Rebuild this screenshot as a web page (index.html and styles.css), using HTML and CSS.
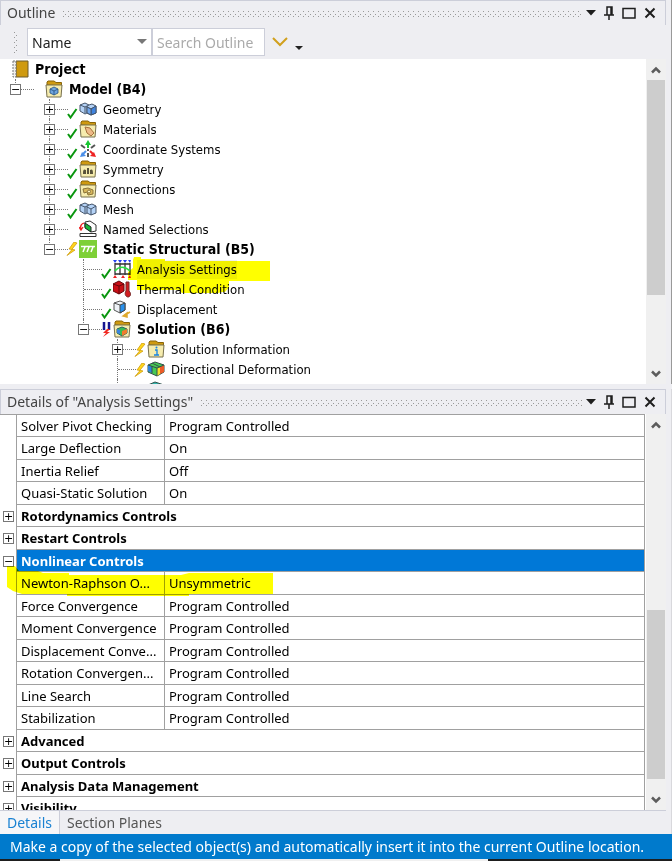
FILE: index.html
```
<!DOCTYPE html>
<html lang="en">
<head>
    <meta charset="UTF-8">
    <meta name="viewport" content="width=device-width, initial-scale=1.0">
    <title>Outline</title>
    <link rel="stylesheet" href="styles.css">
</head>
<body>

    <!-- Shared icons -->
    <svg class="sprite" aria-hidden="true">
        <symbol id="check" viewBox="0 0 12 12"><path d="M2 6.500l2.500 3.500L10.500 1.500" fill="none" stroke="#0a960f" stroke-width="2"/></symbol>
        <symbol id="bolt" viewBox="0 0 12 15"><path d="M8 0L3 7l3 .5L1 13.500l8-5.500-3-.8L11 1z" fill="#ffd51c" stroke="#c89400" stroke-width=".7"/></symbol>
        <symbol id="folder" viewBox="0 0 18 18">
            <path d="M2 5V2l1-1h6l2 1.500h5.500V6z" fill="#cf9a10" stroke="#8a6508"/>
            <path d="M1 5h16l-1 12H2z" fill="#f6ecae" stroke="#77704e"/>
        </symbol>
        <symbol id="cube" viewBox="0 0 10 10">
            <path d="M1 3l4-2 4 2v4L5 9 1 7z" fill="#6fa5de" stroke="#234f80" stroke-width=".8"/>
            <path d="M1 3l4 2 4-2M5 5v4" fill="none" stroke="#234f80" stroke-width=".8"/>
        </symbol>
        <symbol id="blocks" viewBox="0 0 18 14">
            <path d="M1 3l5-2 4 2 3-1 4 2v7l-5 2-4-2-2 1-5-3z" fill="#b4d2f6" stroke="#44546a"/>
            <path d="M1 3l5 2v6M6 5l4-2M8 5l4 2v6M12 7l5-3M8 4v7" fill="none" stroke="#44546a"/>
        </symbol>
        <symbol id="pin" viewBox="0 0 10 14"><path d="M3 9V1h5v8M0 9h10M5 9v5M7 1v8" fill="none" stroke="#1e1e1e" stroke-width="1.500"/></symbol>
        <symbol id="close" viewBox="0 0 12 12"><path d="M1.500 1.500l9 9M10.500 1.500l-9 9" stroke="#1e1e1e" stroke-width="2"/></symbol>
        <symbol id="square" viewBox="0 0 14 12"><path d="M1 1.500h12v9.500H1z" fill="none" stroke="#1e1e1e" stroke-width="1.500"/></symbol>
        <symbol id="down" viewBox="0 0 10 6"><path d="M0 0h10L5 5.500z" fill="#1e1e1e"/></symbol>
        <symbol id="chevron" viewBox="0 0 10 8"><path d="M1 6.500l4-4 4 4" fill="none" stroke="#5c5c5c" stroke-width="2.500"/></symbol>
    </svg>

    <!-- Outline panel -->
    <section class="panel outline">
        <header class="titlebar">
            <h2>Outline</h2>
            <span class="grip"></span>
            <button aria-label="Menu"><svg width="10" height="6"><use href="#down"/></svg></button>
            <button aria-label="Pin"><svg width="10" height="14"><use href="#pin"/></svg></button>
            <button aria-label="Maximize"><svg width="14" height="12"><use href="#square"/></svg></button>
            <button aria-label="Close"><svg width="12" height="12"><use href="#close"/></svg></button>
        </header>
        <div class="toolbar">
            <span class="grip grip-vertical"></span>
            <div class="select-box">
                <select aria-label="Filter by"><option>Name</option></select>
                <svg width="10" height="6"><path d="M0 0h10L5 5z" fill="#777"/></svg>
            </div>
            <input type="text" aria-label="Search Outline" placeholder="Search Outline">
            <button aria-label="Expand"><svg width="16" height="10"><path d="M1 1l7 7 7-7" fill="none" stroke="#d1a01d" stroke-width="2"/></svg></button>
            <button class="more" aria-label="More"><svg width="8" height="4"><path d="M0 0h8L4 4z" fill="#222"/></svg></button>
        </div>
        <div class="scroll-area">
            <div class="tree">
                <ul>
                    <li class="root">
                        <div class="node bold"><svg class="icon" viewBox="0 0 18 18"><path d="M5 1h12v16H5z" fill="#cf9a10" stroke="#6d5a2a"/><path d="M2 1h3v16H2z" fill="#eee" stroke="#777" stroke-dasharray="2 1"/></svg><span>Project</span></div>
                        <ul>
                            <li>
                                <div class="node bold model"><button class="box" aria-label="Collapse">−</button><i class="link"></i><svg class="icon" viewBox="0 0 18 18"><use href="#folder"/><use href="#cube" x="4" y="6" width="10" height="10"/></svg><span>Model (B4)</span></div>
                                <ul>
                                    <li><div class="node"><button class="box" aria-label="Expand">+</button><i class="link"></i><svg class="state check"><use href="#check"/></svg><svg class="icon" viewBox="0 0 18 18"><use href="#blocks" y="2" width="18" height="14"/><path d="M12 9l5-3v7l-5 2z" fill="#3f83df" stroke="#44546a"/><path d="M8 7l4 2v6l-4-2z" fill="#6fa6ee" stroke="#44546a"/></svg><span>Geometry</span></div></li>
                                    <li><div class="node"><button class="box" aria-label="Expand">+</button><i class="link"></i><svg class="state check"><use href="#check"/></svg><svg class="icon" viewBox="0 0 18 18"><use href="#folder"/><path d="M6 7l5 1 4 5-3 3-4-3z" fill="#edb988" stroke="#a5713c"/></svg><span>Materials</span></div></li>
                                    <li><div class="node"><button class="box" aria-label="Expand">+</button><i class="link"></i><svg class="state check"><use href="#check"/></svg><svg class="icon" viewBox="0 0 18 18"><path d="M9 8V4" stroke="#19c733" stroke-width="2"/><path d="M9 0l3 5H6z" fill="#19c733"/><path d="M11 11l3 3" stroke="#e22" stroke-width="2"/><path d="M17 17l-6-1 4-4z" fill="#e22"/><path d="M7 11l-3 3" stroke="#4b8fe8" stroke-width="2"/><path d="M1 17l6-1-4-4z" fill="#4b8fe8"/><path d="M2 5l4 3M16 5l-4 3M9 13v4M8 10h2" stroke="#555" stroke-width="2"/></svg><span>Coordinate Systems</span></div></li>
                                    <li><div class="node"><button class="box" aria-label="Expand">+</button><i class="link"></i><svg class="state check"><use href="#check"/></svg><svg class="icon" viewBox="0 0 18 18"><use href="#folder"/><path d="M4 14c0-5 1-5 3-4v4zM8 14V8h2v6zM11 14v-4c2-1 3-1 3 4z" fill="#59533a"/></svg><span>Symmetry</span></div></li>
                                    <li><div class="node"><button class="box" aria-label="Expand">+</button><i class="link"></i><svg class="state check"><use href="#check"/></svg><svg class="icon" viewBox="0 0 18 18"><use href="#folder"/><path d="M4 9l5-1 5 2v4l-5 1-1-3-3 1z" fill="#d8b75c" stroke="#8a733a"/><circle cx="10" cy="11.500" r="1.500" fill="#fff5c0" stroke="#8a733a"/></svg><span>Connections</span></div></li>
                                    <li><div class="node"><button class="box" aria-label="Expand">+</button><i class="link"></i><svg class="state check"><use href="#check"/></svg><svg class="icon" viewBox="0 0 18 18"><use href="#blocks" y="2" width="18" height="14"/></svg><span>Mesh</span></div></li>
                                    <li><div class="node"><button class="box" aria-label="Expand">+</button><i class="link"></i><i class="state"></i><svg class="icon" viewBox="0 0 18 18"><path d="M6 2l5-1 6 4v6l-5 1-6-5z" fill="#fff" stroke="#333"/><path d="M6 3l6 4v5L6 8z" fill="#18b83a" stroke="#222"/><path d="M5 3C2 4 1 6 2 9M0 7l2 3 2-3" fill="none" stroke="#e22" stroke-width="1.300"/><path d="M1 13.500h16v3H1z" fill="#fff" stroke="#333"/></svg><span>Named Selections</span></div></li>
                                    <li>
                                        <div class="node bold"><button class="box" aria-label="Collapse">−</button><i class="link"></i><svg class="state"><use href="#bolt"/></svg><svg class="icon" viewBox="0 0 18 18"><path d="M0 0h18v18H0z" fill="#7ed037"/><path d="M2 6.500h14M6 7l-2 5M10 7l-2 5M14 7l-2 5" stroke="#fff" stroke-width="1.500"/></svg><span>Static Structural (B5)</span></div>
                                        <ul>
                                            <li><div class="node current"><i class="link wide"></i><svg class="state check"><use href="#check"/></svg><svg class="icon" viewBox="0 0 18 18"><path d="M2 3v12M7 3v12M12 3v12M17 3v12M2 4h15M2 14h15" stroke="#333" stroke-width="1.300"/><path d="M2 11c4-5 10-5 15 0" fill="none" stroke="#29df43" stroke-width="1.500"/><path d="M0 0h4L2 3zM5 0h4L7 3zM10 0h4l-2 3zM15 0h3l-1 3z" fill="#2441ee"/><path d="M0 18h4l-2-3zM8 18h4l-2-3zM15 18h3l-1-3z" fill="#e22"/></svg><span>Analysis Settings</span>
                                                <svg class="marker marker-tree" width="144" height="36"><path d="M5 3L6 0h7v2h24v2h105v20H101v6l-4 5h-3l-4 1H54l-3-3H9V23H0v-8l5-4z"/></svg></div></li>
                                            <li><div class="node"><i class="link wide"></i><svg class="state check"><use href="#check"/></svg><svg class="icon" viewBox="0 0 18 18"><path d="M0 4l6-3 5 3v7l-5 3-6-3z" fill="#c90f16" stroke="#65070a"/><path d="M0 4l6 2 5-2M6 6v8" fill="none" stroke="#65070a"/><path d="M13 2h3v9c3 3 1 6-1 6s-4-3-2-6z" fill="#d21d20" stroke="#762828"/></svg><span>Thermal Condition</span></div></li>
                                            <li><div class="node"><i class="link wide"></i><svg class="state check"><use href="#check"/></svg><svg class="icon" viewBox="0 0 18 18"><path d="M1 3l6-2 5 2v7l-5 3-6-3z" fill="#eef2f7" stroke="#555"/><path d="M7 5l5-2v7l-5 3z" fill="#2990eb" stroke="#444"/><path d="M1 3l6 2" stroke="#555"/><path d="M17 12l-5 3M10 16l4-3v4z" fill="#e0a92c" stroke="#e0a92c" stroke-width="1.500"/></svg><span>Displacement</span></div></li>
                                            <li>
                                                <div class="node bold"><button class="box" aria-label="Collapse">−</button><i class="link"></i><svg class="state" viewBox="0 0 12 15"><path d="M4 0v8M9 0v8" stroke="#16168f" stroke-width="2.500"/><path d="M7 7l-4 4h3l-3 4 7-5H7l3-3z" fill="#f12b24"/></svg><svg class="icon" viewBox="0 0 18 18"><use href="#folder"/><path d="M4 9l5-2 5 2v4l-5 3-5-3z" fill="#36be52" stroke="#28605c"/><path d="M9 11l5-2v4l-5 3z" fill="#f07b2d"/><path d="M4 9l3 1v4l-3-1z" fill="#3b83e0"/></svg><span>Solution (B6)</span></div>
                                                <ul>
                                                    <li><div class="node"><button class="box" aria-label="Expand">+</button><i class="link"></i><svg class="state bolt"><use href="#bolt"/></svg><svg class="icon" viewBox="0 0 18 18"><use href="#folder"/><path d="M8 10h2v5M7 15h5" fill="none" stroke="#1683e3" stroke-width="1.300"/><circle cx="9.500" cy="7.500" r="1" fill="#1683e3"/></svg><span>Solution Information</span></div></li>
                                                    <li><div class="node"><i class="link wide"></i><svg class="state bolt"><use href="#bolt"/></svg><svg class="icon" viewBox="0 0 18 18"><path d="M1 5l7-3 9 3v7l-7 4-9-4z" fill="#46ca54" stroke="#33504a"/><path d="M1 5l4 2v6l-4-2z" fill="#2d83df"/><path d="M10 8l3-1v7l-3 2z" fill="#f4df2c"/><path d="M13 7l4-2v7l-4 2z" fill="#ed5b27"/><path d="M1 5l9 3 7-3M10 8v8M5 3l8 4M5 6v7" fill="none" stroke="#33504a"/></svg><span>Directional Deformation</span></div></li>
                                                    <li><div class="node"><i class="link wide"></i><i class="state"></i><svg class="icon" viewBox="0 0 18 18"><path d="M1 5l7-3 9 3v7l-7 4-9-4z" fill="#33b6ae" stroke="#33504a"/></svg><span>Total Deformation</span></div></li>
                                                </ul>
                                            </li>
                                        </ul>
                                    </li>
                                </ul>
                            </li>
                        </ul>
                    </li>
                </ul>
            </div>
            <div class="scrollbar">
                <svg class="arrow" viewBox="0 0 10 8"><use href="#chevron"/></svg>
                <div class="track"><div class="thumb thumb-outline"></div></div>
                <svg class="arrow arrow-down" viewBox="0 0 10 8"><use href="#chevron"/></svg>
            </div>
        </div>
    </section>

    <!-- Details panel -->
    <section class="panel details">
        <header class="titlebar">
            <h2>Details of "Analysis Settings"</h2>
            <span class="grip"></span>
            <button aria-label="Menu"><svg width="10" height="6"><use href="#down"/></svg></button>
            <button aria-label="Pin"><svg width="10" height="14"><use href="#pin"/></svg></button>
            <button aria-label="Maximize"><svg width="14" height="12"><use href="#square"/></svg></button>
            <button aria-label="Close"><svg width="12" height="12"><use href="#close"/></svg></button>
        </header>
        <div class="scroll-area">
            <div class="grid">
                <table>
                    <colgroup><col class="col-box"><col class="col-name"><col></colgroup>
                    <tbody>
                        <tr><td></td><td>Solver Pivot Checking</td><td>Program Controlled</td></tr>
                        <tr><td></td><td>Large Deflection</td><td>On</td></tr>
                        <tr><td></td><td>Inertia Relief</td><td>Off</td></tr>
                        <tr><td></td><td>Quasi-Static Solution</td><td>On</td></tr>
                        <tr><td><button class="box" aria-label="Expand">+</button></td><th colspan="2">Rotordynamics Controls</th></tr>
                        <tr><td><button class="box" aria-label="Expand">+</button></td><th colspan="2">Restart Controls</th></tr>
                        <tr class="selected"><td><button class="box" aria-label="Collapse">−</button></td><th colspan="2">Nonlinear Controls</th></tr>
                        <tr class="marked"><td><svg class="marker marker-grid" width="268" height="32"><path d="M0 0h8l4 5h19l5 2h26v2h112l8-2h84v21h-84v2H60v-2H15l-9-3-6-4z"/></svg></td><td>Newton-Raphson O...</td><td>Unsymmetric</td></tr>
                        <tr><td></td><td>Force Convergence</td><td>Program Controlled</td></tr>
                        <tr><td></td><td>Moment Convergence</td><td>Program Controlled</td></tr>
                        <tr><td></td><td>Displacement Conve...</td><td>Program Controlled</td></tr>
                        <tr><td></td><td>Rotation Convergen...</td><td>Program Controlled</td></tr>
                        <tr><td></td><td>Line Search</td><td>Program Controlled</td></tr>
                        <tr><td></td><td>Stabilization</td><td>Program Controlled</td></tr>
                        <tr><td><button class="box" aria-label="Expand">+</button></td><th colspan="2">Advanced</th></tr>
                        <tr><td><button class="box" aria-label="Expand">+</button></td><th colspan="2">Output Controls</th></tr>
                        <tr><td><button class="box" aria-label="Expand">+</button></td><th colspan="2">Analysis Data Management</th></tr>
                        <tr><td><button class="box" aria-label="Expand">+</button></td><th colspan="2">Visibility</th></tr>
                    </tbody>
                </table>
            </div>
            <div class="scrollbar">
                <svg class="arrow" viewBox="0 0 10 8"><use href="#chevron"/></svg>
                <div class="track track-end"><div class="thumb thumb-details"></div></div>
                <svg class="arrow arrow-down" viewBox="0 0 10 8"><use href="#chevron"/></svg>
            </div>
        </div>
        <nav class="tabs">
            <button class="active">Details</button>
            <button>Section Planes</button>
        </nav>
    </section>

    <footer class="status">Make a copy of the selected object(s) and automatically insert it into the current Outline location.</footer>
    <div class="taskbar"><span></span></div>

</body>
</html>
```
FILE: styles.css
```
* {
    box-sizing: border-box;
}
body {
    margin: 0;
    height: 100vh;
    display: flex;
    flex-direction: column;
    overflow: hidden;
    background-color: #eeeef2;
    color: #000;
    font-family: "Noto Sans", "Open Sans", sans-serif;
    font-size: 13px;
}
button {
    padding: 0;
    border: none;
    background: none;
    font: inherit;
    color: inherit;
    cursor: pointer;
}
svg {
    display: block;
    flex: none;
}
ul {
    margin: 0;
    padding: 0;
    list-style: none;
}
.sprite {
    position: absolute;
    width: 0;
    height: 0;
}

/* Panels */
.panel {
    display: flex;
    flex-direction: column;
    min-height: 0;
    padding-right: 5px;
    border-right: 1px solid #d8d8dc;
}
.outline {
    flex: 384 1 0;
    margin-bottom: 5px;
    border-right-color: #999;
}
.details {
    flex: 445 1 0;
}
.titlebar {
    display: flex;
    align-items: center;
    gap: 8px;
    flex: none;
    height: 25px;
    padding: 0 9px 0 6px;
    border: 1px solid #ccced9;
    border-bottom: none;
}
.titlebar h2 {
    margin: 0;
    padding-bottom: 2px;
    font-size: 14px;
    font-weight: normal;
    color: #444;
}
.titlebar .grip {
    margin-left: -2px;
    margin-right: -4px;
}
.grip {
    flex: 1;
    height: 7px;
    background-image: radial-gradient(circle, #999 0, transparent 1px), radial-gradient(circle, #999 0, transparent 1px);
    background-size: 5px 5px;
    background-position: 0 -1px, 2px 2px;
}
.toolbar {
    display: flex;
    align-items: center;
    flex: none;
    height: 34px;
    padding-left: 12px;
}
.grip-vertical {
    flex: none;
    width: 7px;
    height: 22px;
    margin-right: 8px;
}
.select-box {
    position: relative;
    width: 125px;
}
.select-box svg {
    position: absolute;
    right: 5px;
    top: 11px;
    pointer-events: none;
}
.toolbar select, .toolbar input {
    height: 28px;
    padding: 0 4px;
    border: 1px solid #ccced9;
    border-radius: 0;
    background-color: #fff;
    font-family: inherit;
    font-size: 14px;
    color: #222;
    appearance: none;
}
.toolbar select {
    display: block;
    width: 100%;
}
.toolbar input {
    width: 113px;
}
.toolbar input::placeholder {
    color: #aaa;
}
.toolbar button {
    margin-left: 7px;
}
.toolbar .more {
    margin-top: 12px;
}
.scroll-area {
    display: flex;
    flex: 1;
    min-height: 0;
}

/* Tree */
.tree {
    flex: 1;
    overflow: hidden;
    background-color: #fff;
    font-family: "DejaVu Sans Condensed", "DejaVu Sans", sans-serif;
    font-size: 13px;
}
.tree li {
    position: relative;
}
.tree ul ul {
    padding-left: 10px;
}
.tree ul ul ul, .tree ul ul ul ul ul {
    padding-left: 34px;
}
.node {
    position: relative;
    display: flex;
    align-items: center;
    height: 20px;
    white-space: nowrap;
}
.root > .node {
    padding-left: 11px;
}
.node span {
    margin-left: 6px;
}
.current span {
    background-color: #f0f0f0;
    line-height: 19px;
}
.bold {
    font-size: 14px;
    font-weight: bold;
}
.model .icon {
    margin-left: 11px;
}
.tree ul ul li::before {
    content: "";
    position: absolute;
    left: 5px;
    top: 0;
    bottom: 0;
    border-left: 1px dotted #777;
}
.tree ul ul li:last-child::before {
    bottom: auto;
    height: 10px;
}
.box {
    position: relative;
    display: flex;
    align-items: center;
    justify-content: center;
    flex: none;
    width: 11px;
    height: 11px;
    border: 1px solid #777;
    background-color: #fff;
    font: 11px/9px "DejaVu Sans", sans-serif;
}
.link {
    flex: none;
    width: 13px;
    border-top: 1px dotted #777;
}
.wide {
    width: 18px;
    margin-left: 6px;
}
.icon {
    width: 18px;
    height: 18px;
}
.state {
    flex: none;
    width: 12px;
    height: 15px;
    margin-left: -2px;
    margin-right: 1px;
}
.check {
    margin-top: 8px;
}
.bolt {
    margin-top: 3px;
}
.marker {
    position: absolute;
    fill: #ffff00;
    mix-blend-mode: multiply;
    pointer-events: none;
}
.marker-tree {
    left: 50px;
    top: -2px;
    z-index: 1;
}

/* Scrollbars */
.scrollbar {
    display: flex;
    flex-direction: column;
    align-items: center;
    flex: none;
    width: 20px;
    background-color: #f0f0f0;
}
.arrow {
    width: 10px;
    height: 8px;
    margin: 7px 0 6px;
}
.arrow-down {
    transform: rotate(180deg);
}
.track {
    display: flex;
    flex-direction: column;
    flex: 1;
    width: 18px;
}
.track-end {
    justify-content: flex-end;
    padding-bottom: 10px;
}
.thumb {
    background-color: #cdcdcd;
}
.thumb-outline {
    height: 76%;
}
.thumb-details {
    height: 49%;
}

/* Details grid */
.grid {
    flex: 1;
    min-width: 0;
    padding-right: 1px;
    overflow: hidden;
    background-color: #fff;
}
table {
    width: 100%;
    table-layout: fixed;
    border-collapse: separate;
    border-spacing: 0;
    border-top: 1px solid #a0a0a0;
}
.col-box {
    width: 17px;
}
.col-name {
    width: 148px;
}
tr {
    height: 22px;
}
tr:nth-child(even) {
    height: 23px;
}
td, th {
    padding: 0 0 0 4px;
    border-right: 1px solid #a0a0a0;
    border-bottom: 1px solid #a0a0a0;
    line-height: 20px;
    text-align: left;
    white-space: nowrap;
}
td:first-child {
    padding: 0 0 0 3px;
    border-bottom: none;
}
.selected th {
    background-color: #0078d7;
    color: #fff;
}
.marked td:first-child {
    position: relative;
}
.marker-grid {
    left: 7px;
    top: -6px;
}

/* Tabs and status */
.tabs {
    display: flex;
    flex: none;
    height: 24px;
    border-top: 1px solid #ccced9;
    font-size: 14px;
    color: #555;
}
.tabs button {
    padding: 0 7px;
}
.tabs .active {
    border-right: 1px solid #ccced9;
    background-color: #f6f6f8;
    color: #1a82d2;
}
.status {
    flex: none;
    height: 25px;
    padding-left: 10px;
    background-color: #007acc;
    color: #fff;
    font-size: 14px;
    line-height: 25px;
    white-space: nowrap;
}
.taskbar {
    flex: none;
    height: 2px;
    padding-left: 60px;
    background-color: #1e1e1e;
}
.taskbar span {
    display: block;
    width: 70%;
    height: 2px;
    background-color: #f0f0f0;
}
```
